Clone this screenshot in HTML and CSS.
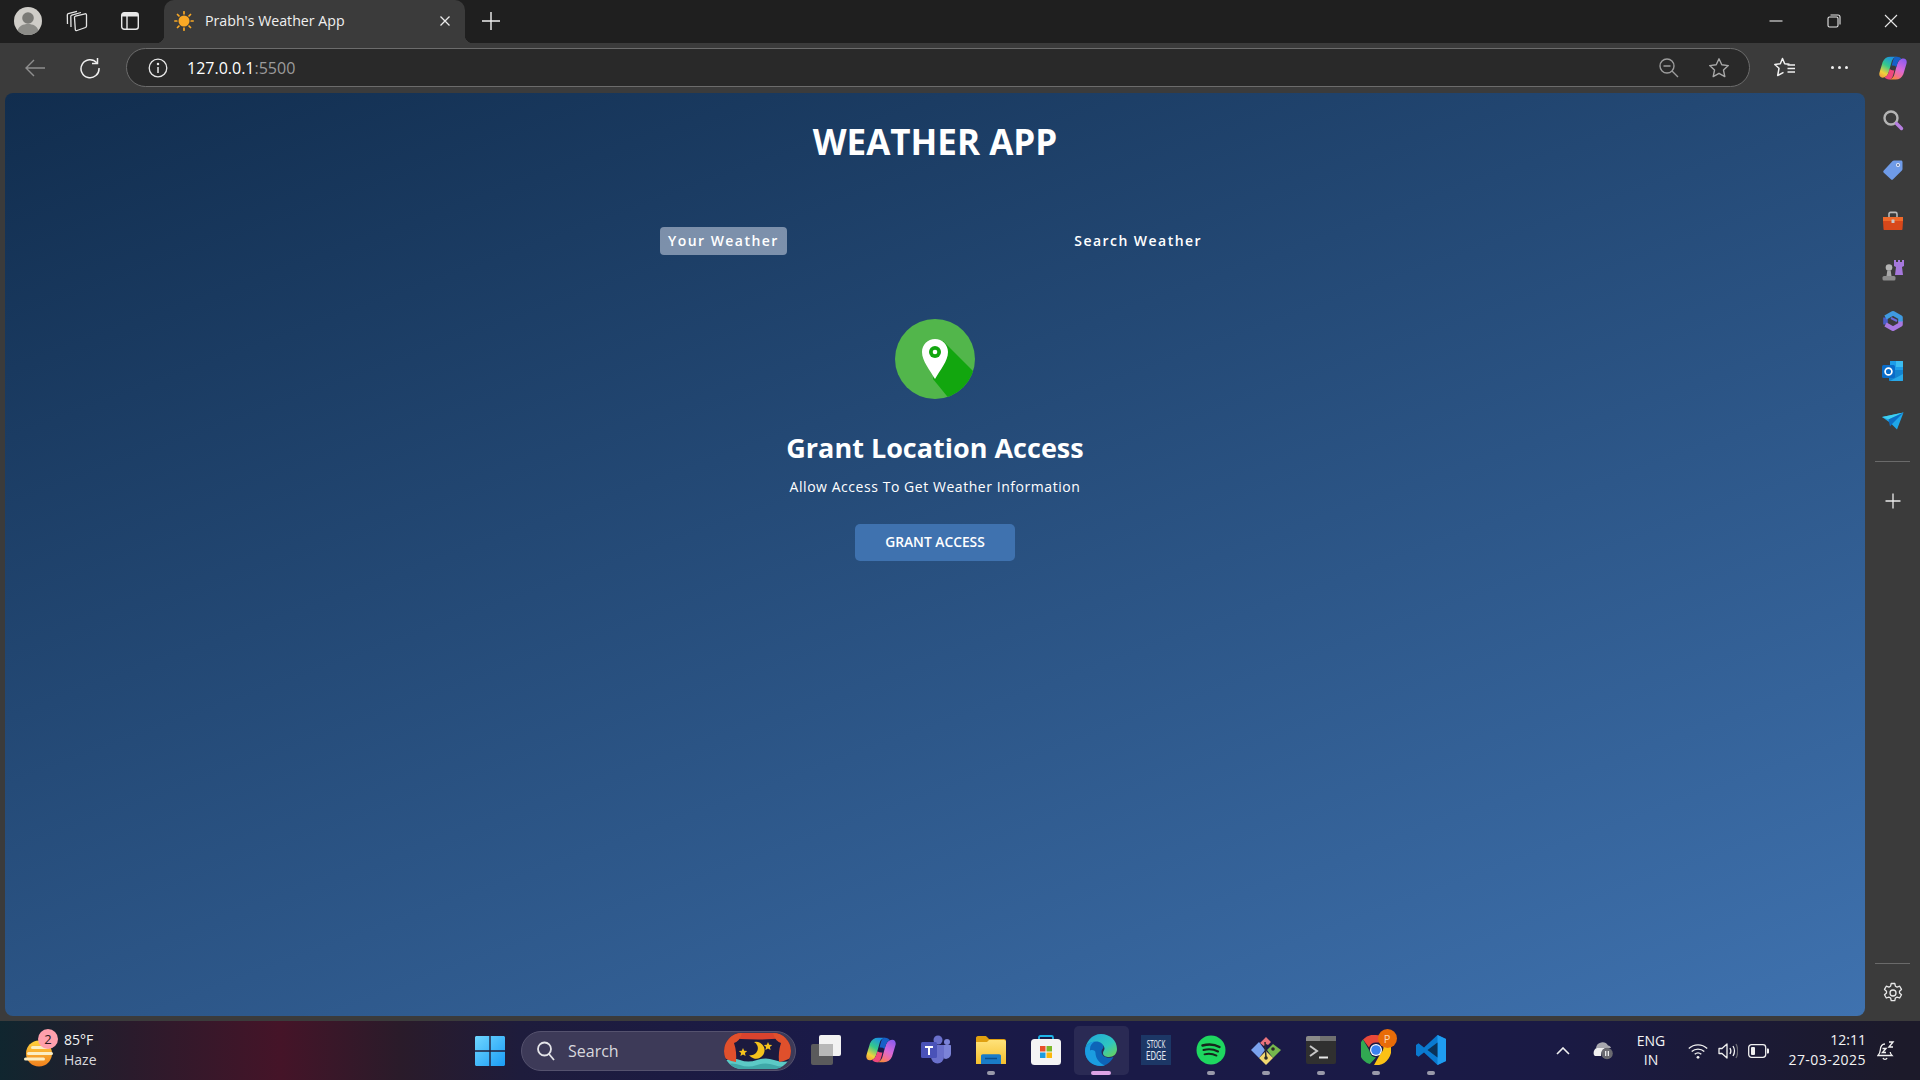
FILE: index.html
```html
<!DOCTYPE html>
<html lang="en">
<head>
  <meta charset="UTF-8" />
  <meta name="viewport" content="width=device-width, initial-scale=1.0" />
  <title>Prabh's Weather App</title>
  <link rel="stylesheet" href="styles.css">
</head>
<body>
  <!-- shared gradients and the copilot mark -->
  <svg class="defs" width="0" height="0">
    <defs>
      <linearGradient id="copL" x1="0.7" y1="0" x2="0.2" y2="1">
        <stop offset="0" stop-color="#1a8fe8"/><stop offset="0.45" stop-color="#35c98a"/><stop offset="0.8" stop-color="#f2d23c"/><stop offset="1" stop-color="#f2a33c"/>
      </linearGradient>
      <linearGradient id="copR" x1="0.8" y1="0" x2="0.3" y2="1">
        <stop offset="0" stop-color="#8a5cf0"/><stop offset="0.5" stop-color="#d868d8"/><stop offset="0.8" stop-color="#f4708c"/><stop offset="1" stop-color="#f58a3c"/>
      </linearGradient>
      <linearGradient id="edgeA" x1="0" y1="0" x2="1" y2="1">
        <stop offset="0" stop-color="#1fa6dc"/><stop offset="0.6" stop-color="#2fc6c0"/><stop offset="1" stop-color="#6fd44e"/>
      </linearGradient>
      <linearGradient id="sunG" x1="0" y1="0" x2="0" y2="1">
        <stop offset="0" stop-color="#ffd23c"/><stop offset="1" stop-color="#f0801e"/>
      </linearGradient>
      <linearGradient id="winG" x1="0" y1="0" x2="1" y2="1">
        <stop offset="0" stop-color="#6fd6ff"/><stop offset="1" stop-color="#1a9cf5"/>
      </linearGradient>
      <linearGradient id="folderG" x1="0" y1="0" x2="0" y2="1">
        <stop offset="0" stop-color="#ffe27a"/><stop offset="1" stop-color="#f5c02e"/>
      </linearGradient>
      <symbol id="copilot" viewBox="0 0 32 32">
        <path fill="url(#copL)" d="M13 3h7.500c-3 .4-4.800 2-5.800 5l-3.400 12c-1.100 4-3.500 7-7.300 7C1.200 27-.4 24.400.6 21l3.600-12C6 5 8.800 3 13 3z"/>
        <path fill="url(#copR)" d="M19 29h-7.500c3-.4 4.800-2 5.800-5l3.400-12c1.100-4 3.500-7 7.300-7 2.800 0 4.400 2.600 3.400 6l-3.600 12C26 27 23.200 29 19 29z"/>
        <path fill="#1560c8" d="M20.500 3c2.300 0 4 1 5 2.500-2.300.8-3.800 2.800-4.800 6.500l-.8 2.800c-1.700-1.300-3.500-1.800-5.400-1.500l.5-2.300 1-3.500C16.700 5 18 3 20.500 3z"/>
        <path fill="#f0487c" d="M11.500 29c-2.300 0-4-1-5-2.500 2.300-.8 3.800-2.800 4.800-6.500l.8-2.800c1.700 1.300 3.500 1.800 5.400 1.500l-.5 2.300-1 3.500C15.300 27 14 29 11.500 29z"/>
      </symbol>
    </defs>
  </svg>

  <div class="titlebar">
    <span class="avatar">
      <svg width="28" height="28" viewBox="0 0 28 28"><circle cx="14" cy="14" r="14" fill="#cfcdc8"/><circle cx="14" cy="11" r="5.800" fill="#7a7a76"/><path d="M3.500 23.500c1.500-4.500 5.500-6.500 10.500-6.500s9 2 10.500 6.500A14 14 0 0 1 14 28a14 14 0 0 1-10.500-4.500z" fill="#8c8c88"/></svg>
    </span>
    <span class="tbar-btn">
      <svg width="22" height="22" viewBox="0 0 22 22" fill="none" stroke="#e4e4e4" stroke-width="1.300"><path d="M8.500 7.500q0-1 1-1.300L19 3.800q1.500-.3 1.500 1.200V16q0 1-1 1.500L11 20.500q-1.500.5-1.700-1z"/><path d="M5 17 4.800 6.500q0-1 1-1.300L15 2.500"/><path d="M1.500 14 1.300 5q0-1 1-1.300L11 1.300"/></svg>
    </span>
    <span class="tbar-btn">
      <svg width="20" height="20" viewBox="0 0 20 20"><rect x="1.700" y="1.700" width="16.600" height="16.600" rx="2.500" fill="none" stroke="#e8e8e8" stroke-width="1.400"/><path d="M2 2h16v3.500H2z" fill="#e8e8e8"/><path d="M7 5v13" stroke="#e8e8e8" stroke-width="1.400"/></svg>
    </span>
    <div class="tab">
      <svg class="tab-icon" width="20" height="20" viewBox="0 0 20 20"><circle cx="10" cy="10" r="5.500" fill="#f9a825"/><g stroke="#f9a825" stroke-width="1.700" stroke-linecap="round"><path d="M10 .8v2M10 17.200v2M.8 10h2M17.200 10h2M3.500 3.500l1.400 1.400M15.100 15.100l1.400 1.400M3.500 16.500l1.400-1.400M15.100 4.900l1.400-1.400"/></g></svg>
      <span class="tab-title">Prabh's Weather App</span>
      <svg class="tab-close" width="12" height="12" viewBox="0 0 12 12"><path d="M1.500 1.500l9 9M10.500 1.500l-9 9" stroke="#ececec" stroke-width="1.300"/></svg>
    </div>
    <span class="new-tab">
      <svg width="18" height="18" viewBox="0 0 18 18"><path d="M9 0v18M0 9h18" stroke="#f0f0f0" stroke-width="1.400"/></svg>
    </span>
    <div class="win-controls">
      <span class="win-btn"><svg width="14" height="14" viewBox="0 0 14 14"><path d="M.5 7h13" stroke="#e8e8e8" stroke-width="1.100"/></svg></span>
      <span class="win-btn"><svg width="14" height="14" viewBox="0 0 14 14" fill="none" stroke="#e8e8e8" stroke-width="1.100"><rect x="1" y="3" width="10" height="10" rx="1.500"/><path d="M3.500 1h7.500c1.200 0 2 .8 2 2v7.500"/></svg></span>
      <span class="win-btn"><svg width="14" height="14" viewBox="0 0 14 14"><path d="M1 1l12 12M13 1L1 13" stroke="#e8e8e8" stroke-width="1.100"/></svg></span>
    </div>
  </div>

  <div class="toolbar">
    <span class="nav-btn">
      <svg width="22" height="20" viewBox="0 0 22 20" fill="none" stroke="#8e8e8e" stroke-width="1.400"><path d="M21 10H2M10 2l-8 8 8 8"/></svg>
    </span>
    <span class="nav-btn">
      <svg width="22" height="22" viewBox="0 0 22 22" fill="none" stroke="#f0f0f0" stroke-width="1.500"><path d="M17.800 5.800A9 9 0 1 0 20 11"/><path d="M18.500 1v5.500H13"/></svg>
    </span>
    <div class="address">
      <svg class="addr-info" width="20" height="20" viewBox="0 0 20 20" fill="none" stroke="#e8e8e8" stroke-width="1.300"><circle cx="10" cy="10" r="8.800"/><path d="M10 9v6" stroke-width="1.500"/><circle cx="10" cy="6" r=".6" fill="#e8e8e8"/></svg>
      <span class="url">127.0.0.1<span class="url-port">:5500</span></span>
      <svg class="addr-zoom" width="20" height="20" viewBox="0 0 20 20" fill="none" stroke="#9c9c9c" stroke-width="1.400"><circle cx="8" cy="8" r="7"/><path d="M4.500 8h7M13 13l6 6"/></svg>
      <svg class="addr-star" width="22" height="22" viewBox="0 0 22 22" fill="none" stroke="#a8a8a8" stroke-width="1.400" stroke-linejoin="round"><path d="M11 1.800l2.800 6 6.500.8-4.800 4.500 1.300 6.500-5.800-3.300-5.800 3.300 1.300-6.500L1.700 8.600l6.500-.8z"/></svg>
    </div>
    <span class="tool-btn tool-fav">
      <svg width="22" height="21" viewBox="0 0 22 21" fill="none" stroke="#f0f0f0" stroke-width="1.500" stroke-linejoin="round"><path d="M15.500 7.300 10.700 6.700 8.500 1.500 6.300 6.700.8 7.500 5 11.300 3.700 18.500 9.500 15.300"/><path d="M13.500 8h7.500M13.500 11.500h7.500M13.500 15h7.500"/></svg>
    </span>
    <span class="tool-btn tool-more"><i></i><i></i><i></i></span>
    <span class="tool-btn tool-copilot"><svg width="28" height="28"><use href="#copilot"/></svg></span>
  </div>

  <div class="main">
    <div class="viewport">
      <h1 class="app-title">Weather App</h1>
      <div class="tab-row">
        <p class="app-tab current-tab">Your Weather</p>
        <p class="app-tab">Search Weather</p>
      </div>
      <div class="grant">
        <svg class="grant-pin" width="80" height="80" viewBox="0 0 80 80">
          <clipPath id="pinClip"><circle cx="40" cy="40" r="40"/></clipPath>
          <circle cx="40" cy="40" r="40" fill="#52b64b"/>
          <path d="M48 22 82 56 56 82 38 60z" fill="#12a60e" clip-path="url(#pinClip)"/>
          <path d="M40 20c7.300 0 13 5.700 13 13 0 9-8 18-13 27-5-9-13-18-13-27 0-7.300 5.700-13 13-13z" fill="#fff"/>
          <circle cx="40" cy="33" r="6" fill="#12a60e"/>
          <circle cx="40" cy="33" r="2.300" fill="#fff"/>
        </svg>
        <h2 class="grant-title">Grant Location Access</h2>
        <p class="grant-text">Allow Access To Get Weather Information</p>
        <button class="grant-btn" type="button">Grant Access</button>
      </div>
    </div>

    <div class="sidebar">
      <span class="side-btn">
        <svg width="22" height="22" viewBox="0 0 22 22"><circle cx="9" cy="9" r="6.500" fill="none" stroke="#b4b4b4" stroke-width="2.400"/><path d="M14.500 14.500l5 5" stroke="#b77fe0" stroke-width="3.400" stroke-linecap="round"/></svg>
      </span>
      <span class="side-btn">
        <svg width="22" height="22" viewBox="0 0 22 22"><path d="M12 1.500h7c.9 0 1.500.6 1.500 1.500v7c0 .6-.2 1-.6 1.400l-8.800 8.800c-.7.700-1.500.7-2.200 0L1.800 13.700c-.7-.7-.7-1.500 0-2.200l8.800-9.400c.4-.4.800-.6 1.400-.6z" fill="#6f9be8"/><circle cx="16" cy="6" r="2" fill="#e9eefb"/><circle cx="16" cy="6" r="1" fill="#55668c"/></svg>
      </span>
      <span class="side-btn side-low">
        <svg width="22" height="20" viewBox="0 0 22 20"><path d="M7 6V3c0-1 .6-1.600 1.600-1.600h4.800c1 0 1.600.6 1.600 1.600v3" fill="none" stroke="#b8b8b8" stroke-width="1.600"/><path d="M1 6h20v4H1z" fill="#f0692a"/><path d="M1 10h20l-.5 8c0 .6-.4 1-1 1h-17c-.6 0-1-.4-1-1z" fill="#d8481a"/><rect x="9.500" y="8.500" width="3" height="3.500" rx=".5" fill="#c8c8c8"/></svg>
      </span>
      <span class="side-btn">
        <svg width="22" height="24" viewBox="0 0 22 24"><path d="M12 2h2v2h2V2h2v2h2V2h2v6l-2 1 1 8h-8l1-8-2-1z" fill="#a678dc"/><circle cx="7" cy="9.500" r="3.300" fill="#b4b4b4"/><path d="M5.300 12.500h3.400l.8 5.500H4.500z" fill="#a8a8a8"/><rect x=".5" y="18" width="13" height="4.500" rx="1.500" fill="#8c8c8c"/></svg>
      </span>
      <span class="side-btn side-low">
        <svg width="22" height="22" viewBox="0 0 22 22" fill="none" stroke-width="4.600" stroke-linejoin="round"><path d="M3.500 7.500 3.500 14.500" stroke="#4a5cc8"/><path d="M3.500 14.500 11 18.700 18.500 14.500 18.500 11" stroke="#a878e0"/><path d="M3.500 7.500 11 3.300 18.500 7.500 18.500 11.500" stroke="#3f9ae0"/><path d="M9 8 15 11" stroke="#6a68d8" stroke-width="2"/></svg>
      </span>
      <span class="side-btn side-low">
        <svg width="22" height="22" viewBox="0 0 22 22"><path d="M8 1h12c.6 0 1 .4 1 1v8H8z" fill="#1d9de8"/><path d="M14 1h6c.6 0 1 .4 1 1v5h-7z" fill="#3bbcf0"/><path d="M7 10h14v10c0 .6-.4 1-1 1H8c-.6 0-1-.4-1-1z" fill="#1283d0"/><path d="M8 21l13-7v6c0 .6-.4 1-1 1z" fill="#28a8e8"/><rect x="0" y="5" width="13" height="13" rx="1.500" fill="#0a6cc8"/><circle cx="6.500" cy="11.500" r="3.400" fill="none" stroke="#fff" stroke-width="1.700"/></svg>
      </span>
      <span class="side-btn side-low">
        <svg width="22" height="18" viewBox="0 0 22 18"><path d="M0 5 21.500.5 15 17.500 8.500 11z" fill="#1ea6e8"/><path d="M0 5l6.500 2.500L21.500.5z" fill="#3fd0f0"/><path d="M6.500 7.500 8 14.500 11 11 21.500.5z" fill="#0d6ec4"/></svg>
      </span>
      <div class="side-sep"></div>
      <span class="side-btn side-plus">
        <svg width="16" height="16" viewBox="0 0 16 16"><path d="M8 .5v15M.5 8h15" stroke="#ececec" stroke-width="1.300"/></svg>
      </span>
      <div class="side-sep side-sep-bottom"></div>
      <span class="side-btn">
        <svg width="22" height="22" viewBox="0 0 22 22" fill="none" stroke="#e8e8e8" stroke-width="1.300" stroke-linejoin="round"><circle cx="11" cy="11" r="3"/><path d="M9.200 1.500h3.600l.6 2.700 1.700.9 2.600-.9 1.800 3.200-2 1.800v1.800l2 1.800-1.800 3.200-2.600-.9-1.700.9-.6 2.700H9.200l-.6-2.700-1.700-.9-2.600.9-1.800-3.200 2-1.800V9.200l-2-1.800 1.800-3.200 2.600.9 1.700-.9z"/></svg>
      </span>
    </div>
  </div>

  <div class="taskbar">
    <div class="tb-weather">
      <span class="tb-weather-icon">
        <svg width="30" height="27" viewBox="0 0 30 27"><circle cx="15" cy="13.500" r="13" fill="url(#sunG)"/><g fill="#fbeec4"><rect x="7" y="6" width="18" height="3" rx="1.500"/><rect x="3" y="12" width="26" height="3" rx="1.500"/><rect x="0" y="17.500" width="21" height="3" rx="1.500"/></g></svg>
        <span class="tb-badge">2</span>
      </span>
      <div class="tb-weather-text">
        <div>85°F</div>
        <div class="tb-haze">Haze</div>
      </div>
    </div>

    <span class="tb-start">
      <svg width="30" height="30" viewBox="0 0 30 30" fill="url(#winG)"><path d="M0 1.500C0 .7.700 0 1.500 0h12.800v14.300H0zM15.700 0h12.800c.8 0 1.500.7 1.500 1.500v12.800H15.700zM0 15.700h14.300V30H1.500C.7 30 0 29.300 0 28.500zM15.700 15.700H30v12.800c0 .8-.7 1.500-1.500 1.500H15.700z"/></svg>
    </span>

    <div class="tb-search">
      <svg width="20" height="20" viewBox="0 0 20 20" fill="none" stroke="#e4e4e8" stroke-width="1.800"><circle cx="8.500" cy="8" r="6.500"/><path d="M13 13l5 6"/></svg>
      <span class="tb-search-text">Search</span>
      <svg class="tb-search-art" width="67" height="36" viewBox="0 0 67 36">
        <clipPath id="artClip"><rect width="67" height="36" rx="18"/></clipPath>
        <g clip-path="url(#artClip)">
          <rect width="67" height="36" fill="#1c1a3e"/>
          <path d="M0 28q8-4 16-1t17 0 17 0 17 1v8H0z" fill="#5ccac6"/>
          <path d="M0 32q8-3 16 0t17 0 17 0 17 0v4H0z" fill="#3fa8a8"/>
          <path d="M0 0h67v4q-33 5-67 0z" fill="#d9432e"/>
          <path d="M0 0h18q-2 8-8 10 3 9 2 19-6-1-12-4z" fill="#e0502c"/>
          <path d="M67 0H49q2 8 8 10-3 9-2 19 6-1 12-4z" fill="#e0502c"/>
          <path d="M30 9A8.500 8.500 0 1 1 25 22 7 7 0 0 0 30 9z" fill="#f5c21c"/>
          <path d="M19 15l1.200 2.800 3 .2-2.300 2 .7 3-2.600-1.600-2.600 1.600.7-3-2.300-2 3-.2z" fill="#f5c21c"/>
          <path d="M44 9l1.200 2.800 3 .2-2.300 2 .7 3-2.600-1.600-2.600 1.600.7-3-2.300-2 3-.2z" fill="#f5c21c"/>
        </g>
      </svg>
    </div>

    <div class="tb-apps">
      <span class="tb-app">
        <svg width="30" height="30" viewBox="0 0 30 30"><rect x="8" y="0" width="22" height="21" rx="2" fill="#f2f2f2"/><rect x="0" y="9" width="22" height="21" rx="2" fill="#5e5e5e" fill-opacity=".95"/><rect x="8" y="9" width="14" height="12" fill="#b8b8b8"/></svg>
      </span>
      <span class="tb-app"><svg width="30" height="30"><use href="#copilot"/></svg></span>
      <span class="tb-app">
        <svg width="30" height="30" viewBox="0 0 30 30"><circle cx="17" cy="5" r="4.500" fill="#6a70cc"/><circle cx="26" cy="7" r="3" fill="#7b83d8"/><path d="M11 10h12v12a6.500 6.500 0 0 1-13 0z" fill="#6a70cc"/><path d="M23 10h6c.6 0 1 .4 1 1v8a5 5 0 0 1-7 4.500z" fill="#7b83d8"/><rect x="0" y="7" width="16" height="16" rx="1.500" fill="#4a52b8"/><path d="M4 11h8v2H9v7H7v-7H4z" fill="#fff"/></svg>
      </span>
      <span class="tb-app tb-running">
        <svg width="30" height="28" viewBox="0 0 30 28"><path d="M0 2c0-1 .7-2 2-2h7c1 0 1.500.4 2.300 1.300L13 3h15c1.200 0 2 .8 2 2v3H0z" fill="#e0a010"/><path d="M0 6h11l2-2h15c1.200 0 2 .8 2 2v22H0z" fill="url(#folderG)"/><path d="M5 20c0-1 .8-1.800 1.800-1.800h16.400c1 0 1.800.8 1.800 1.800v8H5z" fill="#1a7cc8"/><path d="M9 22.500h12" stroke="#0c4f8c" stroke-width="1.500"/></svg>
      </span>
      <span class="tb-app">
        <svg width="30" height="30" viewBox="0 0 30 30"><path d="M8 6V2.500C8 1.500 8.600 1 9.500 1h11c.9 0 1.500.5 1.500 1.500V6" fill="none" stroke="#1eb4e8" stroke-width="1.800"/><rect x="0" y="4" width="30" height="26" rx="3.500" fill="#f4f4f4"/><rect x="9" y="11" width="5.500" height="5.500" fill="#e8502a"/><rect x="15.500" y="11" width="5.500" height="5.500" fill="#7cb82a"/><rect x="9" y="17.500" width="5.500" height="5.500" fill="#1c9ce0"/><rect x="15.500" y="17.500" width="5.500" height="5.500" fill="#fbb80c"/></svg>
      </span>
      <span class="tb-app tb-active">
        <svg width="32" height="32" viewBox="0 0 32 32"><path d="M16 0c9 0 16 6.500 16 15 0 5-3.500 8-8 8-3 0-6-1-6-4 0-2 1.500-2.500 1.500-4.500 0-3-3-5-7-5C7 9.500 2 13 0 18 0 8 7 0 16 0z" fill="url(#edgeA)"/><path d="M0 17c0-6 5-9.500 11-9.500 4.500 0 7.500 2.500 7.500 5.500 0 1.500-2 2-2 4.500 0 5 5 7 10 6 .8 0 1.500-.2 2-.4C25.500 28.500 21 32 16 32 7 32 0 25.500 0 17z" fill="#0d64b8"/><path d="M10.500 19c0 5 3.500 10 9.500 12.500-1.300.3-2.700.5-4 .5C7.500 32 0 26 0 17c0-5 4.500-9.500 10-9.500-3 1.500-5 4-5 7.500 0 .5 0 1 .1 1.500 2-1 5.400-.5 5.400 2.500z" fill="#1b9de0"/></svg>
      </span>
      <span class="tb-app">
        <svg width="30" height="30" viewBox="0 0 30 30"><rect width="30" height="30" fill="#1c3766"/><text class="se-text" transform="translate(15 13) scale(.55 1)" text-anchor="middle">STOCK</text><text class="se-text se-bot" transform="translate(15 25) scale(.6 1)" text-anchor="middle">EDGE</text></svg>
      </span>
      <span class="tb-app tb-running">
        <svg width="30" height="30" viewBox="0 0 30 30"><circle cx="15" cy="15" r="14.500" fill="#1ed760"/><g fill="none" stroke="#16261c" stroke-linecap="round"><path d="M6.500 10.500c6-1.800 12-1.300 17 1.500" stroke-width="2.500"/><path d="M7.500 15c5-1.300 10-.9 14.500 1.500" stroke-width="2.100"/><path d="M8.500 19.300c4.300-1 8.300-.6 12 1.300" stroke-width="1.800"/></g></svg>
      </span>
      <span class="tb-app tb-running">
        <svg width="30" height="30" viewBox="0 0 30 30"><path d="M9 8 15 2l5 5-3 3-2-1-2 2z" fill="#e8737c"/><path d="M0 15l8-8 6 8-6 8z" fill="#7aa2ee"/><path d="M16 15l6-6 8 6-8 8z" fill="#76b84c"/><path d="M8 23l7-7 7 7-7 7z" fill="#f0d870"/><path d="M14 7l1 16" stroke="#2a2a2a" stroke-width="1.500"/><circle cx="15" cy="23" r="1.800" fill="#2a2a2a"/><circle cx="22" cy="14" r="1.800" fill="#2a2a2a"/></svg>
      </span>
      <span class="tb-app tb-running">
        <svg width="30" height="28" viewBox="0 0 30 28"><rect width="30" height="28" rx="2" fill="#303030"/><path d="M0 2c0-1.100.9-2 2-2h26c1.100 0 2 .9 2 2v3H0z" fill="#8a8a8a"/><path d="M14 0h16v5H14z" fill="#707070"/><path d="M4 10l7 5-7 5" fill="none" stroke="#c8c8c8" stroke-width="2"/><path d="M13 21.500h9" stroke="#e8e8e8" stroke-width="2"/></svg>
      </span>
      <span class="tb-app tb-running">
        <svg width="30" height="30" viewBox="0 0 30 30"><path d="M15 0a15 15 0 0 1 13 7.500H15a7.500 7.500 0 0 0-7 5L2 4.500A15 15 0 0 1 15 0z" fill="#e8483a"/><path d="M2 4.500l6.500 11.300a7.500 7.500 0 0 0 6.500 6.700L8.800 29A15 15 0 0 1 2 4.500z" fill="#31a952"/><path d="M28 7.500A15 15 0 0 1 13 30l6.500-11.500A7.500 7.500 0 0 0 20.500 7.500z" fill="#fbc116"/><circle cx="15" cy="15" r="6" fill="#fff"/><circle cx="15" cy="15" r="4.800" fill="#3b82f0"/></svg>
        <span class="tb-chrome-badge">P</span>
      </span>
      <span class="tb-app tb-running">
        <svg width="30" height="30" viewBox="0 0 30 30"><path d="M21.500 0 30 4v22l-8.500 4L8 17.500l-5.500 4.300L0 20V10l2.500-1.800L8 12.500z" fill="#0a7ad0"/><path d="M21.500 0 30 4v22l-8.500 4z" fill="#1f9cf0"/><path d="M21.500 7.500v15L11.500 15z" fill="#0a2a4a" fill-opacity=".9"/></svg>
      </span>
    </div>

    <div class="tray">
      <span class="tray-slot tray-chevron">
        <svg width="14" height="8" viewBox="0 0 14 8"><path d="M1 7l6-6 6 6" fill="none" stroke="#f0f0f0" stroke-width="1.600"/></svg>
      </span>
      <span class="tray-slot tray-cloud">
        <svg width="21" height="18" viewBox="0 0 21 18"><path d="M3 6a6.500 6.500 0 0 1 12-2.500c1.500.3 2.500 1 3 2.500H3z" fill="#a8a8ae"/><path d="M1 13c-1.200-3 .5-6.500 3-7h9c-3 1-5 4-5 8H3c-1 0-1.600-.4-2-1z" fill="#f0f0f0"/><circle cx="14" cy="11.500" r="5.800" fill="#6a6a70"/><path d="M12.700 9v5M15.300 9v5" stroke="#fff" stroke-width="1.100"/></svg>
      </span>
      <div class="tray-lang"><div>ENG</div><div>IN</div></div>
      <span class="tray-slot tray-icon">
        <svg width="20" height="16" viewBox="0 0 20 16" fill="none" stroke="#f0f0f0" stroke-width="1.400"><path d="M.8 5.500C6 .6 14 .6 19.200 5.500M3.700 8.500c3.500-3.200 9.100-3.200 12.600 0M6.700 11.300c2-1.700 4.600-1.700 6.600 0"/><circle cx="10" cy="14.300" r="1.400" fill="#f0f0f0" stroke="none"/></svg>
      </span>
      <span class="tray-slot tray-icon">
        <svg width="20" height="18" viewBox="0 0 20 18" fill="none" stroke="#f0f0f0" stroke-width="1.300"><path d="M1 6.500h3l5-4.500v14L4 11.500H1z" stroke-linejoin="round"/><path d="M12 6c1 1.700 1 4.300 0 6M15 4c1.800 3 1.800 7 0 10"/><path d="M18 2c2.300 4 2.300 10 0 14" stroke="#6a6a72"/></svg>
      </span>
      <span class="tray-slot tray-icon">
        <svg width="21" height="14" viewBox="0 0 21 14"><rect x=".7" y=".7" width="17" height="12.600" rx="2.800" fill="none" stroke="#f0f0f0" stroke-width="1.300"/><rect x="3" y="3" width="4" height="8" rx="1" fill="#f0f0f0"/><path d="M19 4.500h1a1 1 0 0 1 1 1v3a1 1 0 0 1-1 1h-1z" fill="#f0f0f0"/></svg>
      </span>
      <div class="tray-clock"><div>12:11</div><div class="tray-date">27-03-2025</div></div>
      <span class="tray-slot tray-bell">
        <svg width="18" height="20" viewBox="0 0 18 20" fill="none" stroke="#f0f0f0" stroke-width="1.300"><path d="M8 3C4.500 3 3.500 6 3.300 9c-.2 2.500-1 4-2.300 5.500h14c-1-1-1.600-2-1.800-3.500"/><path d="M6 17c.6 1.700 3.400 1.700 4 0"/><path d="M5.500 7.500h3.500l-3.500 4H9M12 1h4l-4 5h4" stroke-width="1.400"/></svg>
      </span>
    </div>
  </div>
</body>
</html>
```

FILE: styles.css
```css
/* Reset & full-screen setup */
html, body {
  margin: 0;
  padding: 0;
  height: 100%;
  overflow: hidden;
}
body {
  display: flex;
  flex-direction: column;
  background: #3b3b3b;
  color: #fff;
  font-family: "Open Sans", "Noto Sans", sans-serif;
}
.defs { position: absolute; }

/* Browser title bar */
.titlebar {
  display: flex;
  align-items: center;
  height: 43px;
  flex: none;
  padding-bottom: 2px;
  box-sizing: border-box;
  background: #1f1f1f;
}
.avatar {
  display: flex;
  margin-left: 14px;
  margin-right: 8.5px;
}
.tbar-btn {
  display: flex;
  justify-content: center;
  width: 53px;
}
.tab {
  position: relative;
  display: flex;
  align-items: center;
  align-self: flex-end;
  width: 301px;
  height: 43px;
  margin-left: 7.5px;
  margin-bottom: -2px;
  padding: 0 14px 2px 9px;
  box-sizing: border-box;
  background: #3b3b3b;
  border-radius: 10px 10px 0 0;
}
.tab::before, .tab::after {
  content: "";
  position: absolute;
  bottom: 0;
  width: 8px;
  height: 8px;
}
.tab::before {
  left: -8px;
  background: radial-gradient(circle at 0 0, #1f1f1f 8px, #3b3b3b 8.5px);
}
.tab::after {
  right: -8px;
  background: radial-gradient(circle at 100% 0, #1f1f1f 8px, #3b3b3b 8.5px);
}
.tab-icon { margin-left: 1px; }
.tab-title {
  flex: 1;
  margin-left: 11px;
  font-size: 14.2px;
  color: #f0f0f0;
}
.new-tab {
  display: flex;
  margin-left: 17px;
}
.win-controls {
  display: flex;
  margin-left: auto;
}
.win-btn {
  display: flex;
  justify-content: center;
  width: 57.5px;
}

/* Browser toolbar */
.toolbar {
  display: flex;
  align-items: center;
  height: 50px;
  flex: none;
  padding-bottom: 1px;
  box-sizing: border-box;
}
.nav-btn {
  display: flex;
  justify-content: center;
  width: 55px;
  margin-left: 7px;
}
.nav-btn + .nav-btn { margin-left: 0; }
.address {
  display: flex;
  align-items: center;
  width: 1624px;
  height: 39px;
  margin-left: 9px;
  padding: 0 19px 0 21px;
  box-sizing: border-box;
  background: #292929;
  border: 1px solid #6c6c6c;
  border-radius: 20px;
}
.url {
  margin-left: 19px;
  font-size: 16px;
  color: #fff;
}
.url-port { color: #9c9c9c; }
.addr-zoom { margin-left: auto; }
.addr-star { margin-left: 29px; }
.tool-btn {
  display: flex;
  justify-content: center;
  align-items: center;
  width: 54px;
}
.tool-fav { margin-left: 8px; }
.tool-more { gap: 4px; }
.tool-more i {
  width: 3px;
  height: 3px;
  background: #f0f0f0;
  border-radius: 50%;
}

/* Page + edge sidebar */
.main {
  display: flex;
  flex: 1;
  min-height: 0;
}
.viewport {
  display: flex;
  flex-direction: column;
  align-items: center;
  flex: none;
  width: 1860px;
  margin: 0 0 5px 5px;
  background-image: linear-gradient(160deg, #112d4e 0%, #3f72af 100%);
  border-radius: 8px;
}
.app-title {
  margin: 26px 0 0;
  font-size: 35px;
  line-height: 46px;
  font-weight: 700;
  text-transform: uppercase;
}
.tab-row {
  display: flex;
  justify-content: space-between;
  width: 550px;
  margin-top: 62px;
}
.app-tab {
  margin: 0;
  padding: 5px 8px;
  font-size: 14px;
  line-height: 18px;
  font-weight: 600;
  letter-spacing: 1.45px;
  border-radius: 4px;
}
.current-tab { background: rgba(219, 226, 239, 0.5); }
.grant {
  display: flex;
  flex-direction: column;
  align-items: center;
  margin-top: 64px;
}
.grant-pin { display: block; }
.grant-title {
  margin: 30px 0 0;
  font-size: 27px;
  line-height: 38px;
  font-weight: 700;
}
.grant-text {
  margin: 10px 0 0;
  font-size: 14px;
  line-height: 20px;
  letter-spacing: 0.55px;
}
.grant-btn {
  width: 160px;
  height: 37px;
  margin-top: 27px;
  padding: 0 0 2px;
  background: #3f72af;
  border: 0;
  border-radius: 5px;
  color: #fff;
  font: 600 13.8px "Open Sans", sans-serif;
  text-transform: uppercase;
}

.sidebar {
  display: flex;
  flex-direction: column;
  align-items: center;
  flex: 1;
  padding: 2px 0 3px;
}
.side-btn {
  display: flex;
  justify-content: center;
  align-items: center;
  height: 50px;
  flex: none;
}
.side-low {
  height: 48px;
  padding-top: 2px;
}
.side-sep {
  width: 35px;
  height: 1px;
  margin-top: 16px;
  background: #6a6a6a;
  flex: none;
}
.side-plus { margin-top: 14px; }
.side-sep-bottom {
  margin-top: auto;
  margin-bottom: 4px;
}

/* Windows taskbar */
.taskbar {
  display: flex;
  align-items: center;
  height: 59px;
  flex: none;
  background: linear-gradient(90deg, #10262f 0, #2a1b2c 130px, #451428 280px, #2a1b2a 400px, #1e1c3c 520px, #1a1a48 820px, #1a1a46 1450px, #1a1a44 1560px, #1c1a2a 1900px);
  font-family: "Open Sans", "Noto Sans", sans-serif;
  font-size: 14px;
  color: #f4f4f4;
}
.tb-weather {
  display: flex;
  align-items: center;
  width: 462px;
  padding-left: 24px;
  box-sizing: border-box;
}
.tb-weather-icon {
  position: relative;
  display: flex;
  margin-top: 6px;
}
.tb-badge {
  position: absolute;
  top: -11px;
  left: 14px;
  width: 20px;
  height: 20px;
  background: #ffa0ac;
  border-radius: 50%;
  color: #2a1a20;
  font-size: 13px;
  line-height: 20px;
  text-align: center;
}
.tb-weather-text {
  margin-left: 10px;
  margin-top: -2px;
  line-height: 20px;
}
.tb-haze { color: #d8d8dc; }
.tb-start {
  display: flex;
  justify-content: center;
  width: 55px;
}
.tb-search {
  display: flex;
  align-items: center;
  width: 275px;
  height: 40px;
  margin-left: 4px;
  padding: 0 4px 0 14px;
  box-sizing: border-box;
  background: #3d3a58;
  border: 1px solid #55526e;
  border-radius: 20px;
}
.tb-search-text {
  margin-left: 12px;
  font-size: 16px;
  color: #d8d8de;
}
.tb-search-art { margin-left: auto; }
.tb-apps {
  display: flex;
  margin-left: 2.5px;
}
.tb-app {
  position: relative;
  display: flex;
  justify-content: center;
  align-items: center;
  width: 55px;
  height: 49px;
  margin-top: -1px;
}
.tb-running::after, .tb-active::after {
  content: "";
  position: absolute;
  bottom: 0;
  left: 23.5px;
  width: 8px;
  height: 4px;
  background: #9a9aaa;
  border-radius: 2px;
}
.tb-active {
  background: rgba(255, 255, 255, 0.07);
  border-radius: 5px;
}
.tb-active::after {
  left: 17.5px;
  width: 20px;
  background: #dda4e6;
}
.tb-chrome-badge {
  position: absolute;
  top: 3px;
  left: 29px;
  width: 19px;
  height: 19px;
  background: #e86c08;
  border-radius: 50%;
  color: #fbd9b8;
  font-size: 11px;
  line-height: 19px;
  text-align: center;
}
.se-text {
  fill: #e8ecf4;
  font: 10px "DejaVu Sans", sans-serif;
}
.se-bot { font-size: 12px; }
.tray {
  display: flex;
  align-items: center;
  margin-left: auto;
  padding-right: 14px;
}
.tray-slot {
  display: flex;
  justify-content: center;
  align-items: center;
}
.tray-chevron, .tray-cloud, .tray-bell { width: 40px; }
.tray-icon { width: 30px; }
.tray-lang {
  width: 56px;
  margin-right: 4px;
  margin-top: -1px;
  line-height: 19px;
  text-align: center;
}
.tray-clock {
  width: 93px;
  margin-top: -2px;
  line-height: 20px;
  text-align: right;
}
.tray-date { letter-spacing: 0.45px; }
```
